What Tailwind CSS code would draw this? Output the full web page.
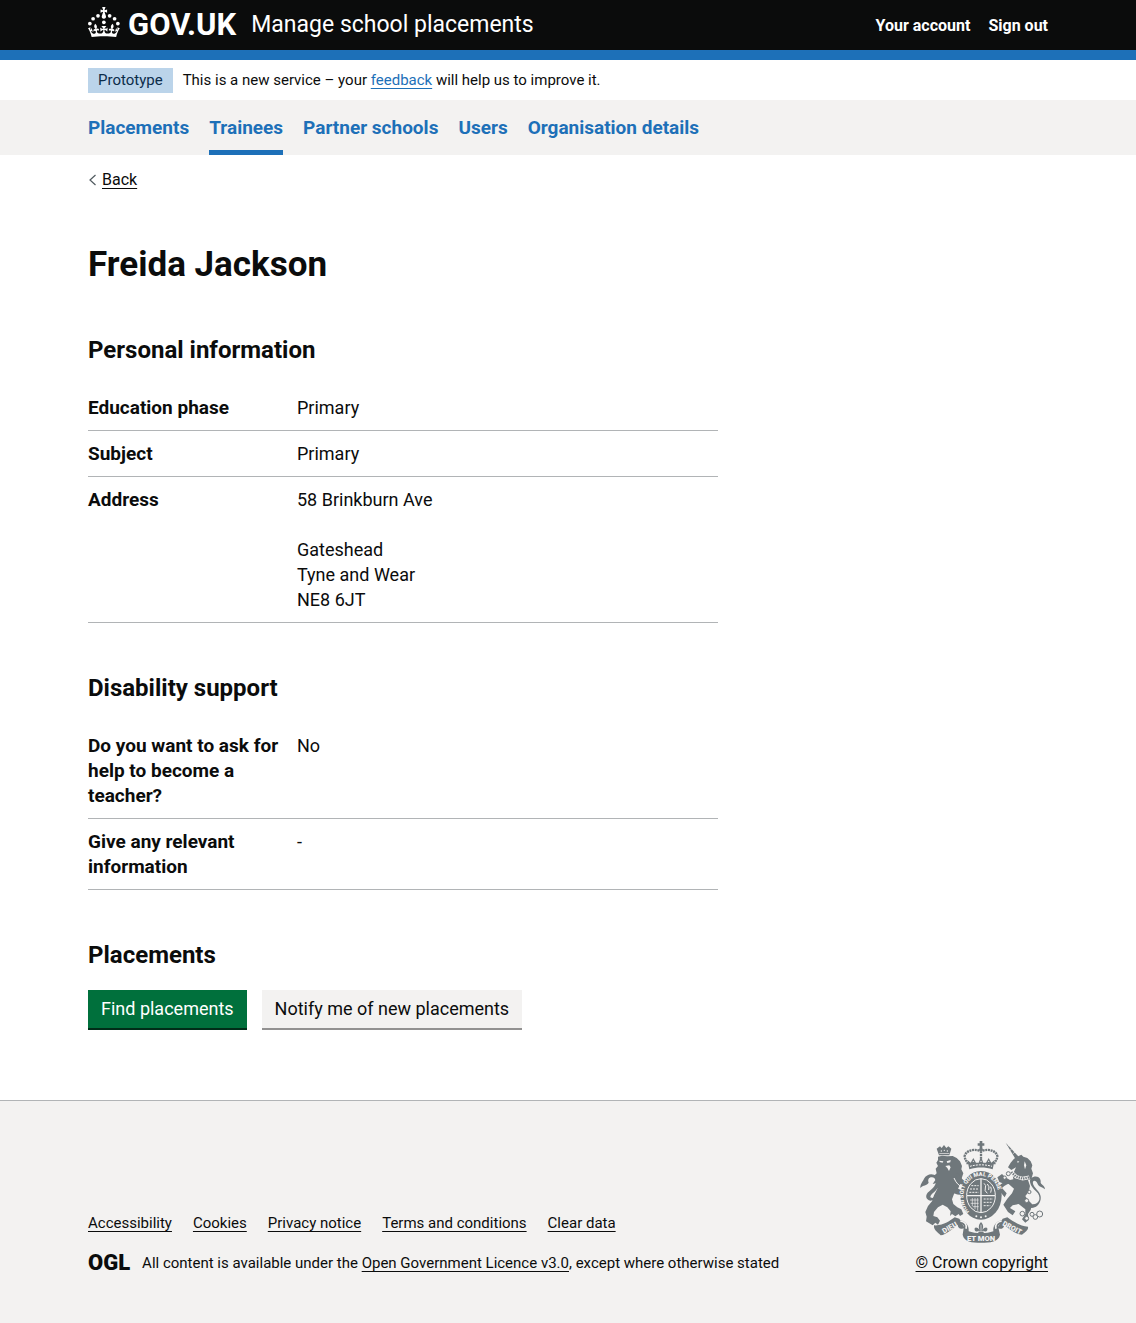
<!DOCTYPE html>
<html lang="en">
<head>
<meta charset="utf-8">
<meta name="viewport" content="width=device-width, initial-scale=1">
<title>Freida Jackson - Manage school placements</title>
<script src="https://cdn.jsdelivr.net/npm/@tailwindcss/browser@4"></script>
</head>
<body class="flex min-h-screen flex-col bg-white font-['Roboto',Arial,sans-serif] text-[18px] leading-[25px] text-[#0b0c0c]">

<header class="border-b-10 border-[#1d70b8] bg-[#0b0c0c] px-8 text-white">
  <div class="mx-auto flex min-h-[50px] max-w-[960px] flex-wrap items-center justify-between gap-x-5">
    <div class="flex items-center gap-[15px]">
      <a href="#" class="flex items-center gap-2" aria-label="GOV.UK">
        <svg class="mb-1.5 h-[30px] w-8" viewBox="0 0 64 60" fill="currentColor" aria-hidden="true">
          <circle cx="20" cy="17.6" r="3.7"/><circle cx="10.2" cy="23.5" r="3.7"/><circle cx="3.7" cy="33.2" r="3.7"/><circle cx="31.7" cy="30.6" r="3.7"/><circle cx="43.3" cy="17.6" r="3.7"/><circle cx="53.2" cy="23.5" r="3.7"/><circle cx="59.7" cy="33.2" r="3.7"/>
          <path d="M33.1,9.8c.2-.1.3-.3.5-.5l4.6,2.4v-6.8l-4.6,1.5c-.1-.2-.3-.3-.5-.5l1.9-5.9h-6.7l1.9,5.9c-.2.1-.3.3-.5.5l-4.6-1.5v6.8l4.6-2.4c.1.2.3.3.5.5l-2.6,8c-.9,2.8,1.2,5.7,4.1,5.7h0c3,0,5.1-2.9,4.1-5.7l-2.6-8ZM37,37.9s-3.4,3.8-4.1,6.1c2.2,0,4.2-.5,6.4-2.8l-.7,8.5c-2-2.8-4.4-4.1-5.7-3.8.1,3.1.5,6.7,5.8,7.2,3.7.3,6.7-1.5,7-3.8.4-2.6-2-4.3-3.7-1.6-1.4-4.5,2.4-6.1,4.9-3.2-1.9-4.5-1.8-7.7,2.4-10.9,3,4,2.6,7.3-1.2,11.1,2.4-1.3,6.2,0,4,4.6-1.2-2.8-3.7-2.2-4.2.2-.3,1.7.7,3.7,3,4.2,1.9.3,4.7-.9,7-5.9-1.3,0-2.4.7-3.9,1.7l2.4-8c.6,2.3,1.4,3.7,2.2,4.5.6-1.6.5-2.8,0-5.3l5,1.8c-2.6,3.6-5.2,8.7-7.3,17.5-7.4-1.1-15.7-1.7-24.5-1.7h0c-8.8,0-17.1.6-24.5,1.7-2.1-8.9-4.7-13.9-7.3-17.5l5-1.8c-.5,2.5-.6,3.7,0,5.3.8-.8,1.6-2.3,2.2-4.5l2.4,8c-1.5-1-2.6-1.7-3.9-1.7,2.3,5,5.2,6.2,7,5.9,2.3-.4,3.3-2.4,3-4.2-.5-2.4-3-3.1-4.2-.2-2.2-4.6,1.6-6,4-4.6-3.7-3.7-4.2-7.1-1.2-11.1,4.2,3.2,4.3,6.4,2.4,10.9,2.5-2.8,6.3-1.3,4.9,3.2-1.8-2.7-4.1-1-3.7,1.6.3,2.3,3.3,4.1,7,3.8,5.4-.5,5.7-4.2,5.8-7.2-1.3-.2-3.7,1-5.7,3.8l-.7-8.5c2.2,2.3,4.2,2.7,6.4,2.8-.7-2.3-4.1-6.1-4.1-6.1h10.6Z"/>
        </svg>
        <span class="text-[31px] leading-[50px] font-bold">GOV.UK</span>
      </a>
      <a href="#" class="text-[23px] leading-[50px]">Manage school placements</a>
    </div>
    <nav aria-label="Account" class="flex gap-[18px] text-[16px] font-bold">
      <a href="#">Your account</a>
      <a href="#">Sign out</a>
    </nav>
  </div>
</header>

<div class="px-8">
  <div class="mx-auto flex max-w-[960px] items-center gap-[10px] pt-2 pb-[7px] text-[15px] leading-[25px]">
    <strong class="bg-[#bbd4ea] px-[10px] font-normal text-[#0c2d4a]">Prototype</strong>
    <span>This is a new service – your <a href="#" class="text-[#1d70b8] underline underline-offset-3">feedback</a> will help us to improve it.</span>
  </div>
</div>

<nav aria-label="Primary" class="bg-[#f3f2f1] px-8">
  <ul class="mx-auto flex max-w-[960px] flex-wrap gap-x-5 text-[19px] font-bold text-[#1d70b8]">
    <li><a href="#" class="block border-b-5 border-transparent pt-[15px] pb-[10px]">Placements</a></li>
    <li><a href="#" aria-current="page" class="block border-b-5 border-[#1d70b8] pt-[15px] pb-[10px]">Trainees</a></li>
    <li><a href="#" class="block border-b-5 border-transparent pt-[15px] pb-[10px]">Partner schools</a></li>
    <li><a href="#" class="block border-b-5 border-transparent pt-[15px] pb-[10px]">Users</a></li>
    <li><a href="#" class="block border-b-5 border-transparent pt-[15px] pb-[10px]">Organisation details</a></li>
  </ul>
</nav>

<div class="grow px-8 pt-[15px] pb-[70px]">
  <div class="mx-auto max-w-[960px]">
    <a href="#" class="flex w-fit items-center gap-[5px] text-[16px] leading-[20px]">
      <svg class="h-3 w-[9px]" viewBox="0 0 9 12" fill="none" stroke="#505a5f" stroke-width="1.2" aria-hidden="true"><path d="M7.5 1 2 6l5.500 5"/></svg>
      <span class="underline underline-offset-3">Back</span>
    </a>
    <main class="max-w-[630px] pt-[55px]">
      <h1 class="mb-[50px] text-[35px] leading-[40px] font-bold">Freida Jackson</h1>

      <h2 class="mb-5 text-[24px] leading-[30px] font-bold">Personal information</h2>
      <dl class="mb-[50px]">
        <div class="flex border-b border-[#b1b4b6] py-[10px]">
          <dt class="w-[209px] shrink-0 pr-[10px] text-[19px] font-bold">Education phase</dt>
          <dd>Primary</dd>
        </div>
        <div class="flex border-b border-[#b1b4b6] py-[10px]">
          <dt class="w-[209px] shrink-0 pr-[10px] text-[19px] font-bold">Subject</dt>
          <dd>Primary</dd>
        </div>
        <div class="flex border-b border-[#b1b4b6] py-[10px]">
          <dt class="w-[209px] shrink-0 pr-[10px] text-[19px] font-bold">Address</dt>
          <dd>58 Brinkburn Ave<br><br>Gateshead<br>Tyne and Wear<br>NE8 6JT</dd>
        </div>
      </dl>

      <h2 class="mb-5 text-[24px] leading-[30px] font-bold">Disability support</h2>
      <dl class="mb-[50px]">
        <div class="flex border-b border-[#b1b4b6] py-[10px]">
          <dt class="w-[209px] shrink-0 pr-[10px] text-[19px] font-bold">Do you want to ask for help to become a teacher?</dt>
          <dd>No</dd>
        </div>
        <div class="flex border-b border-[#b1b4b6] py-[10px]">
          <dt class="w-[209px] shrink-0 pr-[10px] text-[19px] font-bold">Give any relevant information</dt>
          <dd>-</dd>
        </div>
      </dl>

      <h2 class="mb-5 text-[24px] leading-[30px] font-bold">Placements</h2>
      <div class="flex flex-wrap gap-[15px]">
        <button type="button" class="border-b-2 border-[#002d18] bg-[#00703c] px-[13px] py-[7px] leading-[24px] text-white">Find placements</button>
        <button type="button" class="border-b-2 border-[#929191] bg-[#f3f2f1] px-[13px] py-[7px] leading-[24px]">Notify me of new placements</button>
      </div>
    </main>
  </div>
</div>

<footer class="border-t border-[#b1b4b6] bg-[#f3f2f1] px-8 pt-10 pb-[50px] text-[15px] leading-[20px]">
  <div class="mx-auto flex max-w-[960px] flex-wrap items-end justify-between gap-5">
    <div>
      <ul class="mb-5 flex flex-wrap gap-x-[21px]">
        <li><a href="#" class="underline underline-offset-3">Accessibility</a></li>
        <li><a href="#" class="underline underline-offset-3">Cookies</a></li>
        <li><a href="#" class="underline underline-offset-3">Privacy notice</a></li>
        <li><a href="#" class="underline underline-offset-3">Terms and conditions</a></li>
        <li><a href="#" class="underline underline-offset-3">Clear data</a></li>
      </ul>
      <div class="flex items-center gap-3">
        <span class="text-[22px] font-black" role="img" aria-label="Open Government Licence">OGL</span>
        <span>All content is available under the <a href="#" class="underline underline-offset-3">Open Government Licence v3.0</a>, except where otherwise stated</span>
      </div>
    </div>
    <a href="#" class="flex flex-col items-center gap-[10px]">
      <svg class="h-[102px] w-32" viewBox="24 33 384 306" fill="#6f777b" aria-hidden="true">
        <!-- tails -->
        <path d="M62 212C46 210 44 194 58 184C78 170 88 146 66 142C58 141 52 148 56 158C50 168 40 164 31 174C30 162 38 156 42 146C48 134 62 130 72 134C96 142 92 172 68 190C60 198 58 204 68 204L78 196L76 208Z"/>
        <path d="M360 222C388 228 398 202 378 184C360 168 352 146 370 141C386 136 394 148 392 158C396 166 404 166 405 178C396 170 386 172 382 160C378 148 364 150 370 164C376 178 396 188 392 208C388 230 370 238 356 232Z"/>
        <!-- lion -->
        <path d="M80 56L90 49L95 54L102 45L109 54L115 49L124 56L118 76L87 76Z"/>
        <g fill="#f3f2f1"><circle cx="94" cy="63" r="2"/><circle cx="103" cy="61" r="2"/><circle cx="112" cy="63" r="2"/><path d="M88 70h30v2H88z"/></g>
        <path d="M84 80L96 77L112 79L128 78L140 84L150 94L156 108L154 118L160 130L156 142L152 160L144 176L132 192L126 208L130 222L142 232L154 238L160 252L150 258L146 252L136 259L126 252L120 258L122 244L112 232L98 224L84 232L72 246L70 258L82 262L90 272L84 284L76 278L68 286L58 280L48 274L50 260L46 246L54 228L66 214L72 196L82 176L78 160L68 162L76 150L72 138L80 130L77 116L84 108L79 98L84 90Z"/>
        <path d="M88 92L100 94L98 98L89 96ZM110 94L122 90L121 97L112 99ZM106 108L118 106L122 112L117 123L112 114Z" fill="#f3f2f1"/>
        <path d="M142 128C152 138 154 150 170 154L166 164C150 166 142 156 136 146ZM136 170C146 178 154 182 166 180L160 192C146 196 138 194 128 186Z"/>
        <path d="M132 144C138 158 146 168 160 172" fill="none" stroke="#f3f2f1" stroke-width="3"/>
        <!-- unicorn -->
        <path d="M287 38L326 80L316 86Z"/>
        <path d="M292 50l6-5M300 61l7-6M308 72l7-6" stroke="#f3f2f1" stroke-width="2"/>
        <path d="M312 86L326 78L334 74L340 80L352 84L362 94L367 106L364 116L369 130L364 148L354 150L360 168L356 186L346 198L352 208L366 222L362 240L354 252L356 270L346 278L336 268L346 252L346 238L326 222L308 226L300 234L316 244L308 256L294 246L280 224L292 206L306 190L312 176L296 162L278 160L268 156L262 142L276 132L286 142L300 150L310 148L308 134L318 112L304 120L294 112L302 98Z"/>
        <path d="M310 156C296 160 284 166 276 174L290 190L284 202L264 178L268 166L288 152Z"/>
        <path d="M322 92l6 3-5 4zM344 94L349 106L345 118L342 106Z" fill="#f3f2f1"/>
        <path d="M304 126L318 140L338 146L358 142" fill="none" stroke="#f3f2f1" stroke-width="11"/>
        <path d="M304 126L318 140L338 146L358 142" fill="none" stroke="#6f777b" stroke-width="7" stroke-dasharray="4 3"/>
        <g fill="#f3f2f1" stroke="#6f777b" stroke-width="3"><circle cx="295" cy="131" r="6"/><circle cx="284" cy="143" r="5"/><circle cx="337" cy="251" r="7"/><circle cx="350" cy="265" r="6"/><circle cx="366" cy="253" r="6"/><circle cx="376" cy="261" r="7"/><circle cx="389" cy="252" r="9"/><circle cx="350" cy="212" r="6"/><circle cx="358" cy="186" r="5"/></g>
        <!-- ribbon -->
        <path d="M72 286C100 288 120 272 134 262L148 266L164 294C154 300 142 294 144 284C128 296 108 314 92 316C82 306 70 300 72 286Z"/>
        <path d="M354 290C330 288 308 274 292 262L278 266L262 294C272 300 284 294 282 284C298 298 320 314 336 314C346 306 356 300 354 290Z"/>
        <path d="M146 270C164 272 178 284 176 304C196 312 230 312 250 304C248 284 262 272 280 270L264 288L270 314C266 336 240 338 213 338C186 338 162 336 158 314L162 288Z"/>
        <path d="M151 273C164 275 172 284 168 296M275 273C262 275 254 284 258 296" fill="none" stroke="#f3f2f1" stroke-width="5"/>
        <g fill="#f3f2f1" font-family="Roboto, Arial, sans-serif" font-weight="900" text-anchor="middle">
          <text x="120" y="300" font-size="22" transform="rotate(-30 120 294)">DIEU</text>
          <text x="306" y="300" font-size="21" transform="rotate(28 306 294)">DROIT</text>
          <text x="213" y="332" font-size="23">ET MON</text>
        </g>
        <!-- garter and shield -->
        <ellipse cx="213" cy="196" rx="62" ry="73"/>
        <ellipse cx="213" cy="197" rx="43" ry="51" fill="none" stroke="#f3f2f1" stroke-width="3"/>
        <path id="garter" d="M178 245C148 216 154 140 213 138C272 140 278 216 248 245" fill="none"/>
        <text fill="#f3f2f1" font-family="Roboto, Arial, sans-serif" font-weight="900" font-size="17"><textPath href="#garter">HONI SOIT QUI MAL PENSE</textPath></text>
        <g fill="none" stroke="#f3f2f1" stroke-width="3">
          <path d="M213 146v100M171 197h84" stroke-width="4"/>
          <path d="M184 167h22M180 177h26M178 187h28M221 207h28M221 217h26M221 227h20" stroke-dasharray="6 3"/>
          <path d="M222 160q8 6 4 14t6 16M232 162q8 8 4 18M242 170q4 8 0 18"/>
          <path d="M187 204v24M195 204v34M203 204v38M180 210h26M182 220h24M188 230h18" stroke-width="2"/>
        </g>
        <circle cx="199" cy="259" r="3" fill="#f3f2f1"/><circle cx="213" cy="262" r="3" fill="#f3f2f1"/><circle cx="227" cy="259" r="3" fill="#f3f2f1"/>
        <path d="M213 276C222 286 220 294 217 300C224 290 234 290 232 300C230 306 224 304 220 304L222 312H204L206 304C202 304 196 306 194 300C192 290 202 290 209 300C206 294 204 286 213 276Z"/>
        <path d="M213 284v18M204 304h18" stroke="#f3f2f1" stroke-width="2"/>
        <!-- royal crown -->
        <path d="M209 33h8v7h6v7h-6v8h-8v-8h-6v-7h6z"/><circle cx="213" cy="59" r="6"/>
        <path d="M213 64V98M208 62C190 56 168 62 164 78C164 90 172 94 174 104M218 62C236 56 258 62 262 78C262 90 254 94 252 104" fill="none" stroke="#6f777b" stroke-width="7" stroke-dasharray="6 2"/>
        <path d="M172 90L182 98L190 84L198 98L206 98L213 82L220 98L228 98L236 84L244 98L254 90L248 118C226 111 200 111 178 118Z"/>
        <path d="M180 109C200 103 226 103 246 109" fill="none" stroke="#f3f2f1" stroke-width="3" stroke-dasharray="6 3"/>
        <circle cx="190" cy="94" r="2" fill="#f3f2f1"/><circle cx="213" cy="94" r="2" fill="#f3f2f1"/><circle cx="236" cy="94" r="2" fill="#f3f2f1"/>
      </svg>
      <span class="text-[16px] underline underline-offset-3">© Crown copyright</span>
    </a>
  </div>
</footer>
</body>
</html>
